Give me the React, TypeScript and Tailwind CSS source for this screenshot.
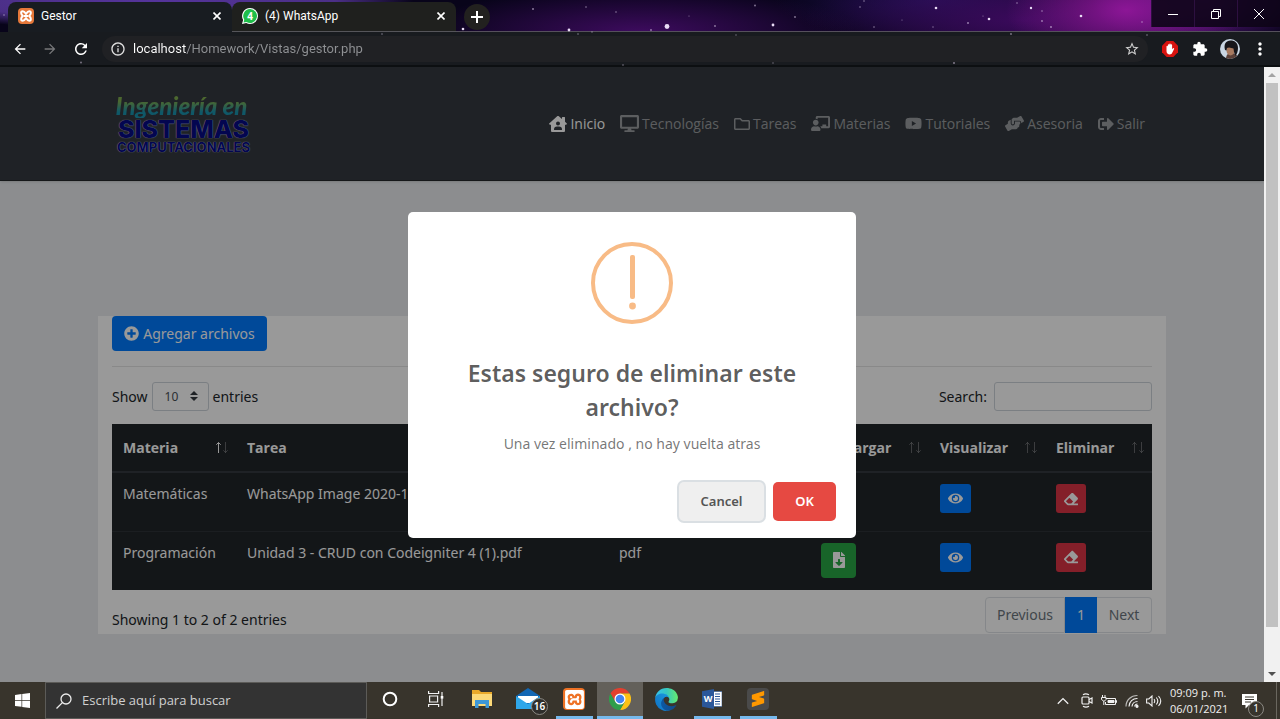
import React from "react";
import {
  FaChalkboardTeacher,
  FaDesktop,
  FaEraser,
  FaEye,
  FaFileDownload,
  FaHandsHelping,
  FaHouseUser,
  FaPlusCircle,
  FaRegFolder,
  FaSignOutAlt,
  FaYoutube,
} from "react-icons/fa";
import { SiSublimetext, SiXampp } from "react-icons/si";
import { MdExtension, MdMoreVert, MdStarBorder, MdInfoOutline, MdRefresh, MdArrowBack, MdArrowForward } from "react-icons/md";

/* ---------- Browser frame ---------- */

const stars: [number, number, number][] = [
  [533, 9, 1], [586, 7, 0.8], [569, 30, 1.4], [592, 32, 0.7], [616, 12, 0.8], [667, 26.5, 2.4],
  [689, 16, 0.6], [715, 26, 0.9], [755, 5.5, 0.9], [773, 25, 1.4], [795, 17, 0.9], [860, 7, 0.8],
  [874, 27, 0.8], [864, 1, 0.8], [936, 8, 1.3], [968, 23, 1], [989, 19, 1.3], [1017, 3, 0.8],
  [1031, 8, 1.2], [1042, 11, 0.8], [1042, 21, 0.9], [1051, 27, 1], [1081, 16, 1.3], [1142, 22, 0.8],
  [4, 15, 0.8], [463, 29, 1.3], [933, 27, 0.7], [902, 20, 0.6], [983, 16, 0.6], [651, 30, 0.9],
  [578, 34, 0.8], [736, 35, 0.7], [1011, 34, 0.9], [954, 63, 1], [623, 65, 0.8], [81, 62.5, 0.9],
  [773, 63, 0.7], [382, 34, 0.8], [1147, 35, 0.8],
];

function Starfield() {
  return (
    <svg className="pointer-events-none absolute inset-0 h-full w-full" preserveAspectRatio="xMinYMin slice" viewBox="0 0 1280 67" aria-hidden="true">
      {stars.map(([x, y, r]) => (
        <circle key={x + "-" + y} cx={x} cy={y} r={r} fill="#e9dcf5" opacity={y > 32 ? 0.5 : r > 1 ? 1 : 0.55} />
      ))}
    </svg>
  );
}

function XamppIcon({ size }: { size: "sm" | "lg" }) {
  return (
    <span className={size === "sm" ? "flex size-4 items-center justify-center rounded-sm bg-[#e5783a] text-white" : "flex size-[22px] items-center justify-center rounded-sm bg-[#ee7225] text-white"}>
      <svg className={size === "sm" ? "size-3" : "size-[17px]"} viewBox="0 0 16 16" fill="none" stroke="#fff" strokeWidth="2.6" strokeLinejoin="round" aria-hidden="true">
        <path d="M8 5.200C6.500 3 5 1.700 3.600 1.700 2.300 1.700 1.500 2.600 1.500 4s.9 2.600 2.300 4c-1.400 1.300-2.300 2.600-2.300 4s.8 2.300 2.100 2.300c1.400 0 2.900-1.300 4.400-3.500 1.500 2.200 3 3.500 4.400 3.500 1.300 0 2.100-.9 2.100-2.300s-.9-2.700-2.300-4c1.400-1.400 2.300-2.600 2.300-4s-.8-2.300-2.100-2.300C11 1.700 9.500 3 8 5.200z" />
        <path d="M5 8h6" />
      </svg>
    </span>
  );
}

function WhatsAppIcon() {
  return (
    <svg className="size-4" viewBox="0 0 16 16" aria-hidden="true">
      <path d="M8 0a8 8 0 0 1 0 16 8 8 0 0 1-3.800-1L0 16l1.100-4A8 8 0 0 1 8 0z" fill="#fff" />
      <path d="M8 1.100a6.900 6.900 0 1 1-3.500 12.800L1.500 14.600l.8-2.900A6.900 6.900 0 0 1 8 1.100z" fill="#1fbf4a" />
      <text x="8" y="11.500" textAnchor="middle" fontSize="10" fontWeight="700" fill="#fff" fontFamily="Open Sans, sans-serif">4</text>
    </svg>
  );
}

function CloseGlyph() {
  return (
    <svg className="size-2" viewBox="0 0 8 8" stroke="#fff" strokeWidth="1.600" aria-hidden="true">
      <path d="M.5.5l7 7M7.500.5l-7 7" />
    </svg>
  );
}

function Tab({ title, icon, active }: { title: string; icon: React.ReactNode; active?: boolean }) {
  return (
    <div className={active ? "flex w-56 items-center gap-[7px] rounded-t-lg bg-[#181c21] px-2.5 pb-0.5" : "flex w-56 items-center gap-[7px] rounded-t-lg border-b border-[#55555a] bg-[#1f201e] px-2.5 pb-px"}>
      {icon}
      <span className="flex-1 truncate font-[Roboto,sans-serif] text-xs text-white">{title}</span>
      <button className="flex size-2.5 items-center justify-center" aria-label={"Cerrar " + title}>
        <CloseGlyph />
      </button>
    </div>
  );
}

function WindowButtons() {
  const base = "flex h-[27px] w-[43px] items-center justify-center border-l border-[#2d1040] bg-[#0d0417]/90";
  return (
    <div className="flex">
      <button className={base} aria-label="Minimizar">
        <svg className="size-2.5" viewBox="0 0 10 10" stroke="#fff"><path d="M0 5.500h10" /></svg>
      </button>
      <button className={base} aria-label="Restaurar">
        <svg className="size-2.5" viewBox="0 0 10 10" stroke="#fff" fill="none"><path d="M.5 2.500h7v7h-7zM2.500 2.500v-2h7v7h-2" /></svg>
      </button>
      <button className={base} aria-label="Cerrar ventana">
        <svg className="size-2.5" viewBox="0 0 10 10" stroke="#fff"><path d="M0 0l10 10M10 0L0 10" /></svg>
      </button>
    </div>
  );
}

function BrowserFrame() {
  return (
    <header className="relative shrink-0 bg-[#08041a] bg-[radial-gradient(120px_60px_at_88%_10px,#8c1696_0%,transparent_100%),radial-gradient(110px_50px_at_94%_0px,#6d1a9a_0%,transparent_100%),radial-gradient(220px_60px_at_80%_20px,#3b0a5c_0%,transparent_100%),radial-gradient(160px_40px_at_73%_0px,#1e1050_0%,transparent_100%),radial-gradient(220px_45px_at_50%_32px,#3d0b5e_0%,transparent_100%),radial-gradient(260px_30px_at_12%_0px,#55349c_0%,#4b2f86_70%,transparent_100%)]">
      <div className="flex h-8 pl-2 pt-0.5">
        <Tab title="Gestor" icon={<XamppIcon size="sm" />} active />
        <Tab title="(4) WhatsApp" icon={<WhatsAppIcon />} />
        <div className="flex flex-1 items-center border-b border-[#55505c] pl-2">
          <button className="flex size-[26px] items-center justify-center rounded-full bg-[#22211f]" aria-label="Nueva pestaña">
            <svg className="size-3" viewBox="0 0 12 12" stroke="#fff" strokeWidth="2"><path d="M6 0v12M0 6h12" /></svg>
          </button>
        </div>
        <div className="-mt-0.5 border-b border-[#55505c]">
          <WindowButtons />
        </div>
      </div>
      <div className="flex h-[35px] items-center border-b-2 border-[#0c0f11] bg-[#181b1f] pl-3 pr-2.5">
        <div className="flex w-[90px] items-center gap-3.5 text-white">
          <button aria-label="Atrás"><MdArrowBack className="size-4" /></button>
          <button aria-label="Adelante" className="text-[#77787a]"><MdArrowForward className="size-4" /></button>
          <button aria-label="Recargar"><MdRefresh className="size-[18px]" /></button>
        </div>
        <div className="flex h-[26px] flex-1 items-center gap-[7px] rounded-full bg-[#202124] px-2">
          <MdInfoOutline className="size-4 text-[#e0e0e0]" />
          <input
            aria-label="Dirección"
            defaultValue="localhost/Homework/Vistas/gestor.php"
            className="min-w-0 flex-1 bg-[linear-gradient(90deg,#fff_53px,#8f9194_53px)] bg-clip-text font-[Roboto,sans-serif] text-[13px] text-transparent outline-none"
          />
          <button aria-label="Agregar a marcadores" className="text-[#d0d0d0]"><MdStarBorder className="size-4" /></button>
        </div>
        <div className="flex items-center pl-3.5">
          <button aria-label="Bloqueador de anuncios">
            <svg className="size-4" viewBox="0 0 16 16">
              <path d="M4.700 0h6.600L16 4.700v6.600L11.300 16H4.700L0 11.300V4.700z" fill="#d8130f" />
              <path d="M4.500 8.500V5.400a.7.7 0 0 1 1.400 0V4a.7.7 0 0 1 1.400 0v-.7a.7.7 0 0 1 1.400 0V4a.7.7 0 0 1 1.400 0v4.300l.9-1a.7.7 0 0 1 1.100.8l-2 4c-.5 1-1.200 1.300-2.300 1.300-2 0-3.300-1.500-3.300-3.500z" fill="#fff" />
            </svg>
          </button>
          <button aria-label="Extensiones" className="ml-3.5 text-white"><MdExtension className="size-4" /></button>
          <button aria-label="Perfil" className="ml-3">
            <svg className="size-5" viewBox="0 0 20 20">
              <defs><clipPath id="avatar"><circle cx="10" cy="10" r="10" /></clipPath></defs>
              <g clipPath="url(#avatar)">
                <path d="M0 0h20v20H0z" fill="#c9d6e3" />
                <path d="M6 20c0-4 2-6 5-6s7 1 7 6z" fill="#5b4038" />
                <ellipse cx="10.500" cy="11.500" rx="4" ry="5" fill="#a87a60" />
                <path d="M5 11C3.500 5 6 1.500 10.500 1.500S18 4 18 9c0 3-1 6-2.500 8L14 13l-.5-3.500L9 8.500 7 9l-.5 2.500z" fill="#17161a" />
              </g>
            </svg>
          </button>
          <button aria-label="Menú" className="ml-2.5 text-white"><MdMoreVert className="size-5" /></button>
        </div>
      </div>
      <Starfield />
    </header>
  );
}

/* ---------- Site ---------- */

const navItems = [
  { label: "Inicio", icon: <FaHouseUser className="size-[18px]" />, active: true },
  { label: "Tecnologías", icon: <FaDesktop className="size-[19px]" /> },
  { label: "Tareas", icon: <FaRegFolder className="size-4" /> },
  { label: "Materias", icon: <FaChalkboardTeacher className="size-[19px]" /> },
  { label: "Tutoriales", icon: <FaYoutube className="size-[17px]" /> },
  { label: "Asesoria", icon: <FaHandsHelping className="size-[19px]" /> },
  { label: "Salir", icon: <FaSignOutAlt className="size-4" /> },
];

function Logo() {
  return (
    <a href="#inicio" className="flex w-[143px] flex-col items-center font-[Inter,sans-serif] text-[#050a85] [text-shadow:0_0_1px_#b4b8d8,0_0_1px_#b4b8d8]">
      <span className="bg-[linear-gradient(180deg,#7fae4f_30%,#1a93ae_75%)] bg-clip-text pr-1 font-[Lato,sans-serif] text-2xl font-black italic leading-6 text-transparent [text-shadow:none]">
        Ingeniería en
      </span>
      <span className="text-[25px] font-extrabold leading-[22px]">SISTEMAS</span>
      <span className="text-[13px] font-bold leading-[14px]">COMPUTACIONALES</span>
    </a>
  );
}

function SiteNav() {
  return (
    <nav className="border-b border-[#23272b] bg-[#343a40] font-['Open_Sans','Noto_Sans',sans-serif] shadow">
      <div className="mx-auto flex h-[113px] max-w-[1068px] items-center justify-between pl-3.5 pr-[21px]">
        <Logo />
        <ul className="flex gap-[15px]">
          {navItems.map((n) => (
            <li key={n.label}>
              <a href={"#" + n.label} className={n.active ? "flex items-center gap-[3px] whitespace-nowrap text-white" : "flex items-center gap-[3px] whitespace-nowrap text-white/50"}>
                {n.icon}
                {n.label}
              </a>
            </li>
          ))}
        </ul>
      </div>
    </nav>
  );
}

function SortArrows({ up }: { up?: boolean }) {
  return (
    <svg className="h-3 w-3.5" viewBox="0 0 14 12" fill="none" stroke="#fff" aria-hidden="true">
      <path d="M3.500 11V.5M1.300 2.700L3.500.5l2.200 2.200" opacity={up ? 1 : 0.3} />
      <path d="M10.500 0v10.500M8.300 8.300l2.200 2.200 2.200-2.200" opacity="0.3" />
    </svg>
  );
}

const columns = [
  { label: "Materia", width: "w-[124px]", sorted: true },
  { label: "Tarea", width: "" },
  { label: "Extensión", width: "w-[202px]" },
  { label: "Descargar", width: "w-[119px]" },
  { label: "Visualizar", width: "w-[116px]" },
  { label: "Eliminar", width: "w-[107px]" },
];

const rows = [
  { subject: "Matemáticas", file: "WhatsApp Image 2020-12-20.jpeg", ext: "jpeg" },
  { subject: "Programación", file: "Unidad 3 - CRUD con Codeigniter 4 (1).pdf", ext: "pdf" },
];

function FilesTable() {
  return (
    <table className="w-full table-fixed bg-[#212529] text-left text-white">
      <thead className="font-['Open_Sans','Noto_Sans',sans-serif]">
        <tr className="h-12 border-b-2 border-[#343a40]">
          {columns.map((c) => (
            <th key={c.label} className={"pl-[11px] pr-[7px] font-bold " + c.width}>
              <span className="flex items-center justify-between">
                {c.label}
                <SortArrows up={c.sorted} />
              </span>
            </th>
          ))}
        </tr>
      </thead>
      <tbody>
        {rows.map((r) => (
          <tr key={r.subject} className="h-[59px] border-t border-[#2e3338] align-top">
            <td className="py-[11px] pl-[11px]">{r.subject}</td>
            <td className="py-[11px] pl-[11px]">{r.file}</td>
            <td className="py-[11px] pl-[11px]">{r.ext}</td>
            <td className="py-[11px] pl-[11px]">
              <button aria-label={"Descargar " + r.subject} className="flex size-[35px] items-center justify-center rounded bg-[#28a745]">
                <FaFileDownload className="size-4" />
              </button>
            </td>
            <td className="py-[11px] pl-[11px]">
              <button aria-label={"Visualizar " + r.subject} className="flex h-[29px] w-[31px] items-center justify-center rounded-[3px] bg-[#007bff]">
                <FaEye className="size-[15px]" />
              </button>
            </td>
            <td className="py-[11px] pl-[11px]">
              <button aria-label={"Eliminar " + r.subject} className="flex h-[29px] w-[30px] items-center justify-center rounded-[3px] bg-[#dc3545]">
                <FaEraser className="size-3.5" />
              </button>
            </td>
          </tr>
        ))}
      </tbody>
    </table>
  );
}

function FileManager() {
  return (
    <main className="mx-auto mt-[135px] max-w-[1068px] bg-white px-3.5 pb-px">
      <button className="flex h-[35px] w-[155px] items-center justify-center gap-1 whitespace-nowrap rounded bg-[#007bff] text-white">
        <FaPlusCircle className="size-[15px]" />
        Agregar archivos
      </button>
      <hr className="mt-[15px] border-black/10" />
      <div className="mt-[15px] flex items-center justify-between">
        <label className="flex items-center gap-1">
          Show
          <span className="relative">
            <select className="h-[29px] w-[57px] appearance-none rounded-[3px] border border-[#ced4da] pl-3 text-[12px] text-[#495057]">
              <option>10</option>
              <option>25</option>
              <option>50</option>
            </select>
            <svg className="pointer-events-none absolute right-[11px] top-[9px] h-2.5 w-2" viewBox="0 0 4 5" fill="#343a40" aria-hidden="true">
              <path d="M2 0L0 2h4zm0 5L0 3h4z" />
            </svg>
          </span>
          entries
        </label>
        <label className="flex items-center gap-[7px]">
          Search:
          <input type="search" className="h-[29px] w-[158px] rounded-[3px] border border-[#ced4da] px-2" />
        </label>
      </div>
      <div className="mt-[13px]">
        <FilesTable />
      </div>
      <div className="mt-[7px] flex items-start justify-between">
        <p className="pt-[13px]">Showing 1 to 2 of 2 entries</p>
        <div className="flex h-9 text-[#6c757d]">
          <button className="w-20 rounded-l border border-[#dee2e6]">Previous</button>
          <button className="w-8 bg-[#007bff] text-white">1</button>
          <button className="w-[55px] rounded-r border border-l-0 border-[#dee2e6]">Next</button>
        </div>
      </div>
    </main>
  );
}

function ConfirmDialog() {
  return (
    <div className="absolute inset-0 flex items-center justify-center bg-black/40">
      <div role="alertdialog" aria-labelledby="dialog-title" aria-describedby="dialog-text" className="flex w-[448px] flex-col items-center rounded-[5px] bg-white px-5 pb-[17px] pt-[30px] text-center">
        <svg className="size-[82px]" viewBox="0 0 82 82" aria-hidden="true">
          <circle cx="41" cy="41" r="39" fill="none" stroke="#f8bb86" strokeWidth="4" />
          <rect x="39" y="13" width="5" height="44" rx="2" fill="#f8bb86" />
          <circle cx="41.500" cy="64" r="3.400" fill="#f8bb86" />
        </svg>
        <h2 id="dialog-title" className="mt-8 max-w-[380px] text-[23px] font-semibold leading-[34px] text-black/65">
          Estas seguro de eliminar este archivo?
        </h2>
        <p id="dialog-text" className="mt-2.5 text-sm text-black/55">
          Una vez eliminado , no hay vuelta atras
        </p>
        <div className="mt-7 flex w-full items-center justify-end gap-[9px] text-[13px] font-semibold">
          <button className="h-[39px] w-[85px] rounded-[5px] bg-[#efefef] text-[#555] ring-2 ring-[#dadfe3]">Cancel</button>
          <button className="h-[39px] w-[63px] rounded-[5px] bg-[#e64942] text-white">OK</button>
        </div>
      </div>
    </div>
  );
}

function Scrollbar() {
  return (
    <div className="flex w-4 shrink-0 flex-col items-center justify-between bg-[#f1f1f1] py-1.5" aria-hidden="true">
      <svg className="h-1 w-2" viewBox="0 0 8 4" fill="#a3a3a3"><path d="M4 0l4 4H0z" /></svg>
      <div className="mb-[45px] mt-1.5 w-3 flex-1 bg-[#c1c1c1]" />
      <svg className="h-1 w-2" viewBox="0 0 8 4" fill="#505050"><path d="M4 4l4-4H0z" /></svg>
    </div>
  );
}

/* ---------- Taskbar ---------- */

function TaskItem({ label, open, current, children }: { label: string; open?: boolean; current?: boolean; children: React.ReactNode }) {
  return (
    <button aria-label={label} className={current ? "flex w-[46px] flex-col items-center bg-[#63605a]" : "flex w-[46px] flex-col items-center"}>
      <span className="flex flex-1 items-center">{children}</span>
      <span className={current ? "h-[3px] w-full bg-[#76b9ed]" : open ? "h-[3px] w-[37px] bg-[#76b9ed]" : "h-[3px]"} />
    </button>
  );
}

function ExplorerIcon() {
  return (
    <svg className="h-[18px] w-5" viewBox="0 0 20 18">
      <path d="M0 0h7l2 2h11v14H0z" fill="#e9a92b" />
      <path d="M0 4h20v12H0z" fill="#fcd978" />
      <path d="M3 10h14v8h-3.500v-4h-7v4H3z" fill="#3d97d6" />
    </svg>
  );
}

function MailIcon() {
  return (
    <span className="relative block h-[22px] w-6">
      <svg className="h-[22px] w-6" viewBox="0 0 24 22">
        <path d="M0 8L12 0l12 8v13H0z" fill="#1267b4" />
        <path d="M2 8h20v7H2z" fill="#fff" />
        <path d="M0 8l12 8 12-8v13H0z" fill="#2fa7ea" />
      </svg>
      <span className="absolute -right-2 top-2.5 flex size-[17px] items-center justify-center rounded-full border border-[#8b8983] bg-[#2f2e2b] text-[10px] font-semibold text-white">16</span>
    </span>
  );
}

function ChromeIcon() {
  return (
    <svg className="size-[22px]" viewBox="0 0 24 24">
      <path d="M1.600 6A12 12 0 0 1 22.400 6H12L6.800 15z" fill="#e2402f" />
      <path d="M22.400 6A12 12 0 0 1 12 24l5.200-9L12 6z" fill="#fbc116" />
      <path d="M12 24A12 12 0 0 1 1.600 6l5.200 9h10.400z" fill="#2f9e4c" />
      <circle cx="12" cy="12" r="6" fill="#fff" />
      <circle cx="12" cy="12" r="4.700" fill="#4384f3" />
    </svg>
  );
}

function EdgeIcon() {
  return (
    <svg className="size-[23px]" viewBox="4 4 257 257">
      <defs>
        <linearGradient id="edgeA" x1="0" x2="1"><stop offset="0" stopColor="#0c59a4" /><stop offset="1" stopColor="#114a8b" /></linearGradient>
        <linearGradient id="edgeB" x1="1" y1="0" x2="0" y2="1"><stop offset="0" stopColor="#1b9de2" /><stop offset="1" stopColor="#0f6fc2" /></linearGradient>
        <linearGradient id="edgeC" x1="0" x2="1"><stop offset="0" stopColor="#35c1f1" /><stop offset="0.500" stopColor="#36c6c0" /><stop offset="1" stopColor="#66eb6e" /></linearGradient>
      </defs>
      <path fill="url(#edgeA)" d="M235.680 195.460a93.730 93.730 0 0 1-10.540 4.710 101.870 101.870 0 0 1-35.900 6.460c-47.320 0-88.540-32.550-88.540-74.320A31.480 31.480 0 0 1 117.130 105c-42.800 1.800-53.800 46.400-53.800 72.530 0 73.880 68.090 81.370 82.760 81.370 7.910 0 19.840-2.300 27-4.560l1.310-.44a128.340 128.340 0 0 0 66.600-52.800 4 4 0 0 0-5.320-5.640z" />
      <path fill="url(#edgeB)" d="M110.340 246.340A79.200 79.200 0 0 1 87.600 225a80.720 80.720 0 0 1 29.530-120c3.120-1.470 8.450-4.130 15.540-4a32.350 32.350 0 0 1 25.690 13 31.880 31.880 0 0 1 6.360 18.660c0-.21 24.460-79.600-80-79.600-43.900 0-80 41.660-80 78.210a130.150 130.150 0 0 0 12.110 56 128 128 0 0 0 156.380 67.110 75.550 75.550 0 0 1-62.780-8z" />
      <path fill="url(#edgeC)" d="M156.940 153.780c-.81 1.050-3.300 2.500-3.300 5.660 0 2.610 1.700 5.120 4.720 7.230 14.380 10 41.490 8.680 41.560 8.680a59.560 59.560 0 0 0 30.270-8.350A61.380 61.380 0 0 0 260.430 114c.26-22.410-8-37.310-11.340-43.910C227.910 28.640 182.190 4.790 132.460 4.790A128 128 0 0 0 4.460 131c.48-36.540 36.800-66 80-66 3.500 0 23.460.34 42 10.070 16.340 8.580 24.900 18.940 30.850 29.210 6.180 10.670 7.280 24.150 7.280 29.520s-2.740 13.330-7.650 19.980z" />
    </svg>
  );
}

function WordIcon() {
  return (
    <svg className="size-5" viewBox="0 0 20 20">
      <path d="M10 2.500h10v15H10z" fill="#fff" stroke="#2b579a" strokeWidth="0.600" />
      <path d="M13 5h5M13 7.500h5M13 10h5M13 12.500h5M13 15h5" stroke="#2b579a" strokeWidth="1.200" />
      <path d="M0 2.300L12 0v20L0 17.700z" fill="#2b579a" />
      <text x="6" y="13.300" textAnchor="middle" fontSize="9" fontWeight="700" fill="#fff" fontFamily="Open Sans, sans-serif">W</text>
    </svg>
  );
}

function Tray() {
  return (
    <div className="ml-auto flex items-center text-[#f0f0f0]">
      <button aria-label="Mostrar iconos ocultos">
        <svg className="h-2 w-3" viewBox="0 0 12 8" fill="none" stroke="#f0f0f0" strokeWidth="1.300"><path d="M.8 6.800L6 1.600l5.200 5.200" /></svg>
      </button>
      <svg className="ml-3 h-[15px] w-3" viewBox="0 0 12 15" fill="none" stroke="#f0f0f0" strokeWidth="1.200" aria-hidden="true">
        <rect x="1" y="4" width="7" height="7" rx="1" />
        <path d="M8 6.500L11 5v5L8 8.500M2 1.800Q4.500 0 8 1.800M2 13.200q3 1.800 6 0" />
      </svg>
      <svg className="ml-2 h-3 w-4" viewBox="0 0 16 12" fill="none" stroke="#f0f0f0" aria-hidden="true">
        <path d="M5 3.500h9.500v6H4.500V7M14.500 5.500h1v2h-1" />
        <path d="M7 5.500h6v2H7z" fill="#f0f0f0" />
        <path d="M1.500 0v2M4 0v2M.5 2.500h4.500v2L3.500 6h-1L.5 4.500zM2.800 6v4" />
      </svg>
      <svg className="ml-2 size-3.5" viewBox="0 0 14 14" fill="none" stroke="#f0f0f0" strokeWidth="1.200" aria-hidden="true">
        <path d="M1 12.500A11 11 0 0 1 12.500 1.500" opacity="0.700" />
        <path d="M4 12.500A8 8 0 0 1 12.500 4.500M7 12.500a5.500 5.500 0 0 1 5.500-5M9.700 12.500a3 3 0 0 1 2.800-2.500" />
        <circle cx="12" cy="12.300" r="1" fill="#f0f0f0" />
      </svg>
      <svg className="ml-[7px] h-3 w-4" viewBox="0 0 16 12" fill="none" stroke="#f0f0f0" strokeWidth="1.100" aria-hidden="true">
        <path d="M.6 4h2.200L6 1v10L2.800 8H.6zM8 4q1.500 2 0 4M10.300 2.500q3 3.500 0 7M12.500 1q4.500 5 0 10" />
      </svg>
      <time className="ml-2 w-[56px] whitespace-nowrap text-center font-['Open_Sans','Noto_Sans',sans-serif] text-[11px] leading-4">
        09:09 p. m.
        <br />
        06/01/2021
      </time>
      <button aria-label="Notificaciones" className="relative ml-4 mr-[18px]">
        <svg className="size-4" viewBox="0 0 16 16"><path d="M0 1h15v11H7l-3.500 3.500V12H0z" fill="#fff" /><path d="M3 4h9M3 6.500h9M3 9h6" stroke="#38342c" /></svg>
        <span className="absolute -bottom-2 left-1.5 flex size-4 items-center justify-center rounded-full border border-[#8b8983] bg-[#38342c] text-[10px] text-white">1</span>
      </button>
      <span className="mr-[3px] h-[37px] w-px bg-[#6a675f]" />
    </div>
  );
}

function Taskbar() {
  return (
    <footer className="flex h-[37px] shrink-0 bg-[#38342c]">
      <button aria-label="Inicio" className="flex w-[45px] items-center justify-center">
        <svg className="size-[15px]" viewBox="0 0 15 15" fill="#fff"><path d="M0 2l6.500-1v6H0zM7.200.9L15 0v7H7.200zM0 7.700h6.500v6L0 12.900zM7.200 7.700H15V15l-7.800-1z" /></svg>
      </button>
      <label className="flex w-[322px] items-center gap-2.5 border border-[#5c5b58] bg-[#333] pl-2.5">
        <svg className="size-4" viewBox="0 0 16 16" fill="none" stroke="#ececec" strokeWidth="1.300" aria-hidden="true"><circle cx="10" cy="6" r="5" /><path d="M6.400 9.600L.5 15.500" /></svg>
        <input aria-label="Buscar" placeholder="Escribe aquí para buscar" className="min-w-0 flex-1 font-['Open_Sans','Noto_Sans',sans-serif] text-[13px] outline-none placeholder:text-[#d0d0d0]" />
      </label>
      <TaskItem label="Cortana">
        <svg className="size-4" viewBox="0 0 16 16" fill="none" stroke="#fff" strokeWidth="2"><circle cx="8" cy="8" r="6.300" /></svg>
      </TaskItem>
      <TaskItem label="Vista de tareas">
        <svg className="size-4" viewBox="0 0 16 16" fill="none" stroke="#f0f0f0" strokeWidth="1.200"><path d="M.6 0v2.500h10V0M1.600 5h8v6h-8zM.6 16v-2.500h10V16M14 1v14" /><path d="M12.700 5h2.600v2.600h-2.600z" fill="#fff" stroke="none" /></svg>
      </TaskItem>
      <TaskItem label="Explorador de archivos"><ExplorerIcon /></TaskItem>
      <TaskItem label="Correo"><MailIcon /></TaskItem>
      <TaskItem label="XAMPP" open>
        <span className="flex size-[22px] items-center justify-center rounded-sm bg-[#ee7225] text-white"><SiXampp className="size-[19px]" /></span>
      </TaskItem>
      <TaskItem label="Google Chrome" current><ChromeIcon /></TaskItem>
      <TaskItem label="Microsoft Edge"><EdgeIcon /></TaskItem>
      <TaskItem label="Word" open><WordIcon /></TaskItem>
      <TaskItem label="Sublime Text" open>
        <span className="flex size-[22px] items-center justify-center rounded-sm bg-[#4a4a4a] text-[#ff9800]"><SiSublimetext className="size-4" /></span>
      </TaskItem>
      <Tray />
    </footer>
  );
}

export default function App() {
  return (
    <div className="flex h-screen flex-col overflow-hidden font-['Noto_Sans','Open_Sans',sans-serif]">
      <BrowserFrame />
      <div className="flex min-h-0 flex-1">
        <div className="relative min-w-0 flex-1 overflow-hidden bg-[#e9ecef] text-sm text-[#212529]">
          <SiteNav />
          <FileManager />
          <ConfirmDialog />
        </div>
        <Scrollbar />
      </div>
      <Taskbar />
    </div>
  );
}
